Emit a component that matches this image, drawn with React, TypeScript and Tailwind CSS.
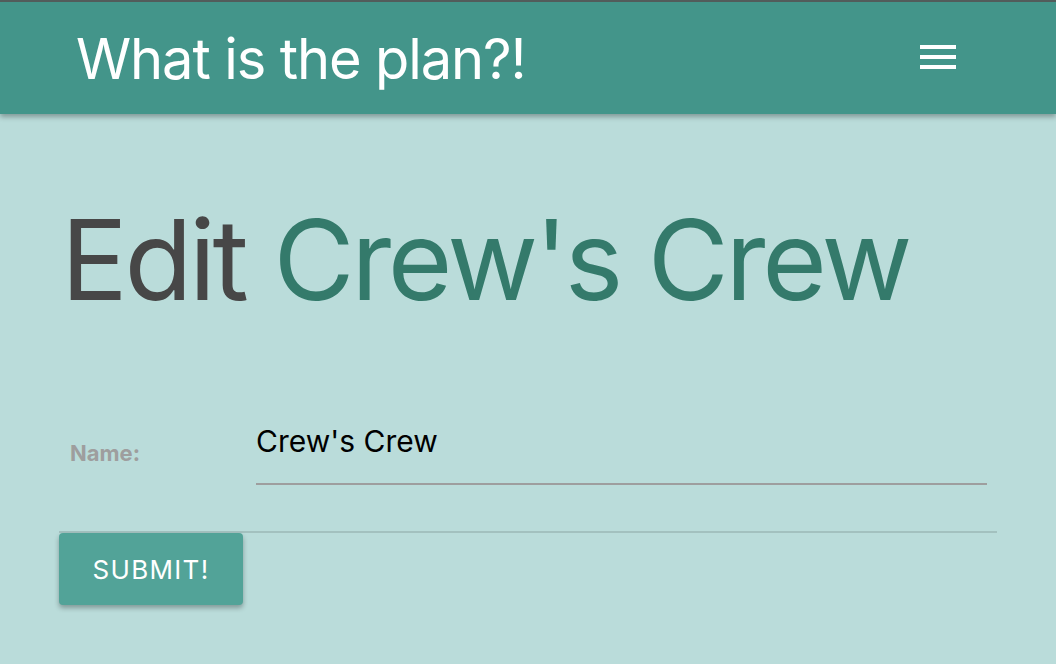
import React from "react";

export default function App() {
  return (
    <div className="min-h-[664px] w-full bg-[#badcda]" style={{ fontFamily: "Inter, 'Liberation Sans', sans-serif" }}>
      <header className="relative z-10 h-[114px] border-t-2 border-[#525c5b] bg-[#43958a] shadow-[0_3px_5px_rgba(0,0,0,0.3)] flex items-center justify-between pl-[76px] pr-[100px]">
        <h1 className="text-white text-[56px] leading-none tracking-[-0.02em] mt-[2px]">What is the plan?!</h1>
        <div className="flex flex-col gap-[6px] mt-[-2px]">
          <span className="block h-[4px] w-[36px] bg-white" />
          <span className="block h-[4px] w-[36px] bg-white" />
          <span className="block h-[4px] w-[36px] bg-white" />
        </div>
      </header>
      <main className="w-[938px] mx-auto">
        <h2 className="mt-[76px] text-[111px] leading-[140px] tracking-[-0.03em] pl-[2px]">
          <span className="text-[#474747]">Edit </span>
          <span className="text-[#347a6b]">Crew's Crew</span>
        </h2>
        <div className="mt-[91px] flex items-start">
          <label className="w-[197px] pl-[11px] pt-[16px] text-[22px] font-bold text-[#9e9e9e]">Name:</label>
          <div className="flex-1 mr-[10px]">
            <div className="text-[30px] text-black leading-[40px] pb-[22px] border-b-2 border-[#9e9e9e]">Crew's Crew</div>
          </div>
        </div>
        <div className="mt-[46px] h-[2px] bg-[#a3c1bf]" />
        <button className="mt-0 w-[184px] h-[72px] rounded-[4px] bg-[#52a398] text-white text-[26px] tracking-[0.05em] shadow-[0_3px_5px_rgba(0,0,0,0.3)]">
          SUBMIT!
        </button>
      </main>
    </div>
  );
}
